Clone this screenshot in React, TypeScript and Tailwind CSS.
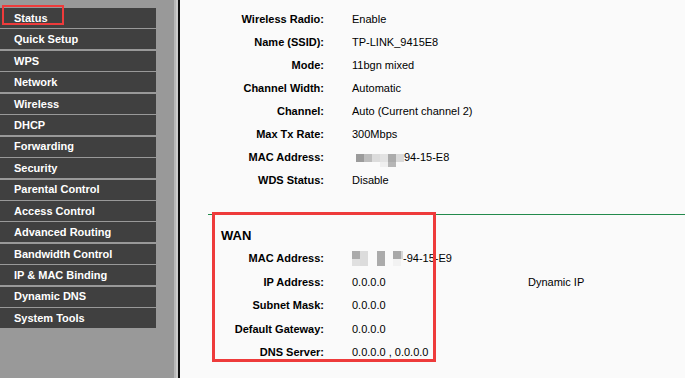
import React from "react";

const menu = [
  "Status",
  "Quick Setup",
  "WPS",
  "Network",
  "Wireless",
  "DHCP",
  "Forwarding",
  "Security",
  "Parental Control",
  "Access Control",
  "Advanced Routing",
  "Bandwidth Control",
  "IP & MAC Binding",
  "Dynamic DNS",
  "System Tools",
];

function Row({
  label,
  value,
  extra,
  tall,
}: {
  label: string;
  value: React.ReactNode;
  extra?: string;
  tall?: boolean;
}) {
  return (
    <div
      className={
        tall
          ? "grid h-[23.4px] grid-cols-[144px_148px_1fr] items-center gap-x-[28px]"
          : "grid h-[23px] grid-cols-[144px_148px_1fr] items-center gap-x-[28px]"
      }
    >
      <div className="text-right text-[11px] font-bold text-black">{label}</div>
      <div className="whitespace-nowrap text-[11px] text-black">{value}</div>
      <div className="whitespace-nowrap text-[11px] text-black">{extra ?? ""}</div>
    </div>
  );
}

function Px({ c, h = "h-[8px]" }: { c: string; h?: string }) {
  return <div className={`w-[8px] ${h}`} style={{ backgroundColor: c }} />;
}

function WlanMac() {
  return (
    <div className="flex items-center">
      <div className="ml-[4px] flex items-start pt-[5px]">
        <Px c="#9b9b9b" />
        <Px c="#bdbdbd" />
        <Px c="#dcdcdc" />
        <div className="flex flex-col">
          <Px c="#e3e3e3" />
          <Px c="#efefef" h="h-[5px]" />
        </div>
        <div className="flex flex-col">
          <Px c="#ababab" />
          <Px c="#b6b6b6" h="h-[5px]" />
        </div>
        <Px c="#dadada" />
      </div>
      <span>94-15-E8</span>
    </div>
  );
}

function WanMac() {
  return (
    <div className="flex items-center">
      <div className="flex items-start">
        <div className="flex flex-col">
          <Px c="#ababab" />
          <Px c="#e0e0e0" h="h-[7px]" />
        </div>
        <Px c="#dcdcdc" h="h-[15px]" />
        <div className="w-[9px]" />
        <Px c="#ababab" h="h-[15px]" />
        <div className="w-[8px]" />
        <div className="flex flex-col">
          <Px c="#a9a9a9" />
          <Px c="#f2f2f2" h="h-[7px]" />
        </div>
        <div className="h-[8px] w-[2px] bg-[#d6d6d6]" />
      </div>
      <span>-94-15-E9</span>
    </div>
  );
}

export default function App() {
  return (
    <div className="flex h-[378px] w-[685px] overflow-hidden font-['Liberation_Sans',Arial,sans-serif]">
      <aside className="relative w-[174px] shrink-0 bg-[#999999] pt-[8px]">
        <nav className="flex w-[156px] flex-col gap-[1.45px]">
          {menu.map((m) => (
            <div
              key={m}
              className="flex h-[20px] items-center bg-[#404040] pl-[14px] text-[11px] font-bold text-white"
            >
              {m}
            </div>
          ))}
        </nav>
        <div className="absolute left-[2px] top-[5px] h-[20px] w-[62px] border-2 border-[#ee3b3b]" />
      </aside>
      <div className="w-[2px] shrink-0 bg-[#b8b8b8]" />
      <div className="w-[2px] shrink-0 bg-[#cccccc]" />
      <div className="w-[2px] shrink-0 bg-[#111111]" />
      <main className="relative flex-1 bg-[#fafafa] pt-[8px]">
        <Row label="Wireless Radio:" value="Enable" />
        <Row label="Name (SSID):" value="TP-LINK_9415E8" />
        <Row label="Mode:" value="11bgn mixed" />
        <Row label="Channel Width:" value="Automatic" />
        <Row label="Channel:" value="Auto (Current channel 2)" />
        <Row label="Max Tx Rate:" value="300Mbps" />
        <Row label="MAC Address:" value={<WlanMac />} />
        <Row label="WDS Status:" value="Disable" />
        <div className="ml-[28px] mt-[22px] h-[1px] bg-[#238a4c]" />
        <div className="mt-[9px] flex h-[23px] items-center pl-[41px] text-[13px] font-bold text-black">WAN</div>
        <Row tall label="MAC Address:" value={<WanMac />} />
        <Row tall label="IP Address:" value="0.0.0.0" extra="Dynamic IP" />
        <Row tall label="Subnet Mask:" value="0.0.0.0" />
        <Row tall label="Default Gateway:" value="0.0.0.0" />
        <Row tall label="DNS Server:" value="0.0.0.0 , 0.0.0.0" />
        <div className="absolute left-[32px] top-[212px] h-[150px] w-[224px] border-[3px] border-[#ee3b3b]" />
      </main>
    </div>
  );
}
